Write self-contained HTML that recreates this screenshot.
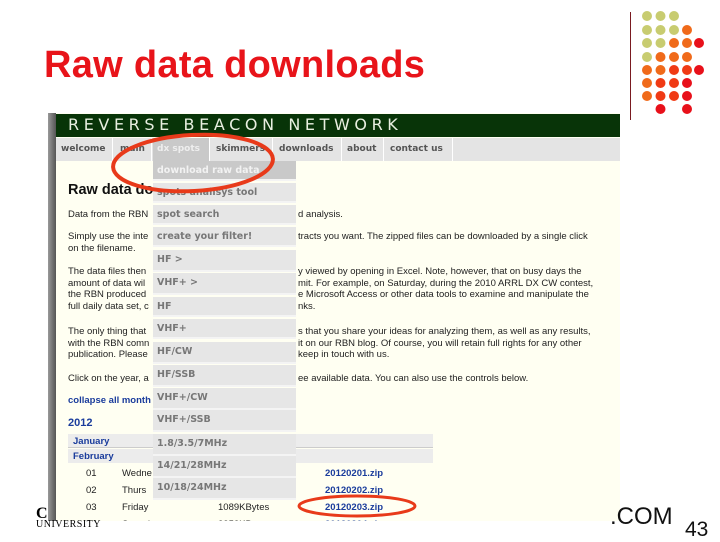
<!DOCTYPE html>
<html><head><meta charset="utf-8"><style>
*{margin:0;padding:0;box-sizing:border-box}
body{width:720px;height:540px;background:#fff;position:relative;overflow:hidden;font-family:"Liberation Sans",Arial,sans-serif}
.a{position:absolute;white-space:nowrap}
.t{font-size:9.5px;color:#222;line-height:11.5px}
.nav span{position:absolute;top:0;height:23px;line-height:23px;font-weight:bold;font-size:9px;color:#666;font-family:"DejaVu Sans",sans-serif;border-right:1px solid #fff}
.dd div{position:absolute;left:0;width:143px;height:20px;background:#e6e6e6;border-bottom:2px solid #f4f4f4;font-family:"DejaVu Sans",sans-serif;font-weight:bold;font-size:9.5px;color:#777;padding-left:4px;line-height:20px}
.lk{color:#1a3c9c;font-weight:bold}
</style></head><body>
<div class="a" style="left:44px;top:44px;font-size:38px;font-weight:bold;color:#e8141a;letter-spacing:0.3px">Raw data downloads</div>
<div class="a" style="left:630px;top:12px;width:1px;height:108px;background:#7a1a20"></div>
<svg class="a" style="left:640px;top:10px" width="80" height="110">
<g fill="#c8cc70"><circle cx="7" cy="6" r="5"/><circle cx="20.5" cy="6" r="5"/><circle cx="34" cy="6" r="5"/>
<circle cx="7" cy="20" r="5"/><circle cx="20.5" cy="20" r="5"/><circle cx="34" cy="20" r="5"/>
<circle cx="7" cy="33" r="5"/><circle cx="20.5" cy="33" r="5"/><circle cx="7" cy="47" r="5"/></g>
<g fill="#f06a1a"><circle cx="47" cy="20" r="5"/><circle cx="34" cy="33" r="5"/><circle cx="47" cy="33" r="5"/>
<circle cx="20.5" cy="47" r="5"/><circle cx="34" cy="47" r="5"/><circle cx="47" cy="47" r="5"/>
<circle cx="7" cy="60" r="5"/><circle cx="20.5" cy="60" r="5"/><circle cx="7" cy="73" r="5"/><circle cx="7" cy="86" r="5"/></g>
<g fill="#f03a14"><circle cx="34" cy="60" r="5"/><circle cx="47" cy="60" r="5"/><circle cx="20.5" cy="73" r="5"/><circle cx="34" cy="73" r="5"/><circle cx="20.5" cy="86" r="5"/><circle cx="34" cy="86" r="5"/></g>
<g fill="#e8101a"><circle cx="59" cy="33" r="5"/><circle cx="59" cy="60" r="5"/><circle cx="47" cy="73" r="5"/><circle cx="47" cy="86" r="5"/><circle cx="20.5" cy="99" r="5"/><circle cx="47" cy="99" r="5"/></g>
</svg>
<div class="a" style="left:48px;top:113px;width:8px;height:408px;background:linear-gradient(90deg,#999,#555)"></div>
<div class="a" style="left:56px;top:113px;width:564px;height:408px;background:#fffff2"></div>
<div class="a" style="left:56px;top:114px;width:564px;height:23px;background:#083408;color:#e8efe0;font-size:16px;letter-spacing:4.6px;line-height:22px;padding-left:12px;font-family:'DejaVu Sans',sans-serif">REVERSE BEACON NETWORK</div>
<div class="a nav" style="left:56px;top:138px;width:564px;height:23px;background:#e4e4e4">
<span style="left:0;width:57px;padding-left:5px;color:#555">welcome</span>
<span style="left:58px;width:38px;padding-left:6px;color:#555">main</span>
<span style="left:97px;width:57px;padding-left:4px;background:#c9c9c9;color:#eee">dx spots</span>
<span style="left:156px;width:61px;padding-left:4px;color:#555">skimmers</span>
<span style="left:219px;width:67px;padding-left:4px;color:#555">downloads</span>
<span style="left:287px;width:41px;padding-left:4px;color:#555">about</span>
<span style="left:329px;width:68px;padding-left:5px;color:#555">contact us</span>
</div>
<div class="a" style="left:68px;top:182px;font-size:14.5px;font-weight:bold;color:#111">Raw data do</div>
<div class="a t" style="left:68px;top:209px">Data from the RBN</div><div class="a t" style="left:298px;top:209px">d analysis.</div>
<div class="a t" style="left:68px;top:231px">Simply use the inte<br>on the filename.</div>
<div class="a t" style="left:298px;top:231px">tracts you want. The zipped files can be downloaded by a single click</div>
<div class="a t" style="left:68px;top:266px">The data files then<br>amount of data wil<br>the RBN produced<br>full daily data set, c</div>
<div class="a t" style="left:298px;top:266px">y viewed by opening in Excel. Note, however, that on busy days the<br>mit. For example, on Saturday, during the 2010 ARRL DX CW contest,<br>e Microsoft Access or other data tools to examine and manipulate the<br>nks.</div>
<div class="a t" style="left:68px;top:326px">The only thing that<br>with the RBN comn<br>publication. Please</div>
<div class="a t" style="left:298px;top:326px">s that you share your ideas for analyzing them, as well as any results,<br>it on our RBN blog. Of course, you will retain full rights for any other<br>keep in touch with us.</div>
<div class="a t" style="left:68px;top:373px">Click on the year, a</div><div class="a t" style="left:298px;top:373px">ee available data. You can also use the controls below.</div>
<div class="a t lk" style="left:68px;top:395px">collapse all month</div>
<div class="a lk" style="left:68px;top:417px;font-size:11px">2012</div>
<div class="a" style="left:68px;top:434px;width:365px;height:14px;background:#ececec;border-bottom:1px solid #ccc"></div>
<div class="a t lk" style="left:73px;top:436px">January</div>
<div class="a" style="left:68px;top:449px;width:365px;height:14px;background:#ececec"></div>
<div class="a t lk" style="left:73px;top:451px">February</div>
<div class="a t" style="left:86px;top:465px;line-height:17px">01<br>02<br>03<br>04</div>
<div class="a t" style="left:122px;top:465px;line-height:17px">Wedne<br>Thurs<br>Friday<br>Saturday</div>
<div class="a t" style="left:218px;top:499px;line-height:17px">1089KBytes<br>2352KBytes</div>
<div class="a t lk" style="left:325px;top:465px;line-height:17px">20120201.zip<br>20120202.zip<br>20120203.zip<br>20120204.zip</div>
<div class="a dd" style="left:153px;top:161px;width:145px;height:340px">
<div style="top:0;background:#c9c9c9;color:#f2f2f2">download raw data</div>
<div style="top:22px">spots analisys tool</div>
<div style="top:44px">spot search</div>
<div style="top:66px">create your filter!</div>
<div style="top:89px;height:22px">HF &gt;</div>
<div style="top:112px;height:22px">VHF+ &gt;</div>
<div style="top:136px">HF</div>
<div style="top:158px">VHF+</div>
<div style="top:181px;height:22px">HF/CW</div>
<div style="top:204px;height:22px">HF/SSB</div>
<div style="top:227px;height:22px">VHF+/CW</div>
<div style="top:249px;height:22px">VHF+/SSB</div>
<div style="top:273px;height:22px">1.8/3.5/7MHz</div>
<div style="top:295px;height:22px">14/21/28MHz</div>
<div style="top:317px;height:22px">10/18/24MHz</div>
</div>
<svg class="a" style="left:0;top:0" width="720" height="540">
<ellipse cx="193" cy="163" rx="80" ry="28" fill="none" stroke="#e83a1a" stroke-width="4" transform="rotate(-3 193 163)"/>
<ellipse cx="357" cy="506" rx="58" ry="10" fill="none" stroke="#e83a1a" stroke-width="3"/>
</svg>
<div class="a" style="left:0;top:521px;width:720px;height:19px;background:#fff"></div>
<div class="a" style="left:36px;top:505px;font-family:'Liberation Serif',serif;font-weight:bold;font-size:16px">C</div>
<div class="a" style="left:36px;top:519px;font-family:'Liberation Serif',serif;font-size:10px;letter-spacing:0.5px">UNIVERSITY</div>
<div class="a" style="left:610px;top:503px;font-size:24px;color:#111">.COM</div>
<div class="a" style="left:685px;top:518px;font-size:21px;color:#111">43</div>
</body></html>
